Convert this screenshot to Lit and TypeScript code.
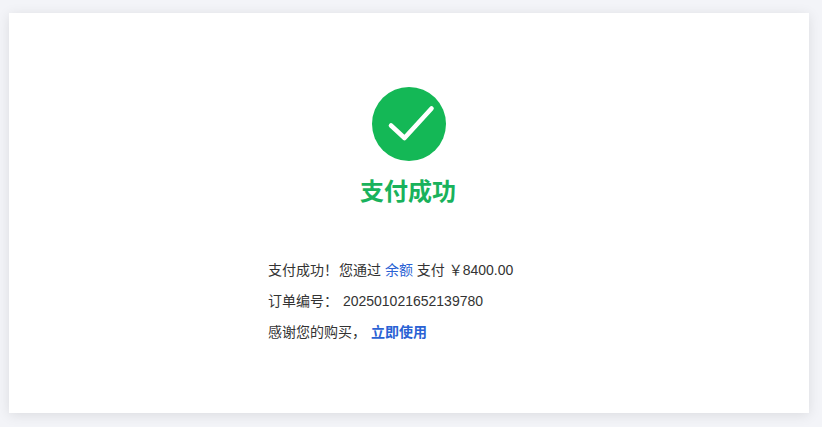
import { LitElement, html, css } from "lit";
import { customElement } from "lit/decorators.js";

@customElement("app-root")
export class AppRoot extends LitElement {
  static styles = css`
    :host {
      display: block;
      height: 427px;
      box-sizing: border-box;
      padding: 13px 13px 14px 9px;
      background: #f3f4f8;
      font-family: "Liberation Sans", Arial, "Noto Sans CJK SC", sans-serif;
      color: #333;
      overflow: hidden;
    }
    .card {
      height: 400px;
      background: #fff;
      box-shadow: 0 2px 12px rgba(0, 0, 0, 0.1);
      display: flex;
      flex-direction: column;
      align-items: center;
      padding-top: 74px;
      box-sizing: border-box;
    }
    .icon { width: 74px; height: 74px; display: block; }
    h1 {
      margin: 12px 0 0;
      padding-right: 2px;
      font-size: 24px;
      line-height: 38px;
      font-weight: 700;
      color: #19b25c;
    }
    .info {
      align-self: flex-start;
      margin: 44px 0 0 259px;
      font-size: 14px;
      line-height: 31px;
    }
    .row { white-space: pre; height: 31px; }
    .lead { margin-right: 1px; }
    .link { color: #2a62d4; }
    .strong { font-weight: 700; margin-left: 5px; }
  `;

  render() {
    return html`
      <div class="card">
        <svg class="icon" viewBox="0 0 74 74" aria-hidden="true">
          <circle cx="37" cy="37" r="37" fill="#14b856"></circle>
          <path d="M19 38.5 L32.5 51 L59.5 21.5" fill="none" stroke="#fff" stroke-width="4.6" stroke-linecap="round" stroke-linejoin="round"></path>
        </svg>
        <h1>支付成功</h1>
        <div class="info">
          <div class="row"><span class="lead">支付成功！</span>您通过 <span class="link">余额</span> 支付 ￥8400.00</div>
          <div class="row"><span class="lead">订单编号：</span> 202501021652139780</div>
          <div class="row">感谢您的购买，<span class="link strong">立即使用</span></div>
        </div>
      </div>
    `;
  }
}
